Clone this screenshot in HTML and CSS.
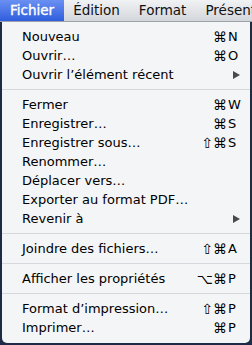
FILE: index.html
```html
<!DOCTYPE html>
<html lang="fr">
<head>
<meta charset="utf-8">
<link rel="stylesheet" href="styles.css">
</head>
<body>
<div class="screen">
  <div class="menubar">
    <span class="title active">Fichier</span>
    <span class="title">Édition</span>
    <span class="title">Format</span>
    <span class="title">Présentation</span>
  </div>
  <div class="menu">
    <div class="item"><span class="label">Nouveau</span><span class="mods">⌘</span><span class="key">N</span></div>
    <div class="item"><span class="label">Ouvrir…</span><span class="mods">⌘</span><span class="key">O</span></div>
    <div class="item"><span class="label">Ouvrir l’élément récent</span><span class="arrow"></span></div>
    <div class="sep"></div>
    <div class="item"><span class="label">Fermer</span><span class="mods">⌘</span><span class="key">W</span></div>
    <div class="item"><span class="label">Enregistrer…</span><span class="mods">⌘</span><span class="key">S</span></div>
    <div class="item"><span class="label">Enregistrer sous…</span><span class="mods">⇧⌘</span><span class="key">S</span></div>
    <div class="item"><span class="label">Renommer…</span></div>
    <div class="item"><span class="label">Déplacer vers…</span></div>
    <div class="item"><span class="label">Exporter au format PDF…</span></div>
    <div class="item"><span class="label">Revenir à</span><span class="arrow"></span></div>
    <div class="sep"></div>
    <div class="item"><span class="label">Joindre des fichiers…</span><span class="mods">⇧⌘</span><span class="key">A</span></div>
    <div class="sep"></div>
    <div class="item"><span class="label">Afficher les propriétés</span><span class="mods">⌥⌘</span><span class="key">P</span></div>
    <div class="sep"></div>
    <div class="item"><span class="label">Format d’impression…</span><span class="mods">⇧⌘</span><span class="key">P</span></div>
    <div class="item"><span class="label">Imprimer…</span><span class="mods">⌘</span><span class="key">P</span></div>
  </div>
</div>
</body>
</html>
```

FILE: styles.css
```css
html, body {
  margin: 0;
  padding: 0;
}
body {
  background: #1e2b45;
  width: 252px;
  height: 345px;
  overflow: hidden;
  font-family: "DejaVu Sans", "Liberation Sans", sans-serif;
  color: #000;
}
.screen {
  width: 252px;
  height: 345px;
}
.menubar {
  height: 21px;
  display: flex;
  background: linear-gradient(#f1f2f4, #d3d6db);
  border-bottom: 1px solid #9da2aa;
  white-space: nowrap;
  overflow: hidden;
}
.title {
  font-size: 13.5px;
  line-height: 21px;
  padding: 0 9.5px;
  color: #111;
}
.title.active {
  padding-left: 10px;
  color: #fff;
  background: linear-gradient(#6a90f2, #2f5ddd);
  -webkit-text-stroke: 0.35px #fff;
}
.menu {
  margin-left: 2px;
  width: 248px;
  background: #f4f5f7;
  border-radius: 0 0 5px 5px;
  padding: 5px 0 6px;
  box-sizing: border-box;
  height: 321px;
}
.item {
  display: grid;
  grid-template-columns: 1fr auto 12px;
  align-items: center;
  height: 19px;
  padding: 0 10px 0 20px;
  font-size: 13px;
  white-space: nowrap;
}
.label {
  grid-column: 1;
}
.mods {
  grid-column: 2;
  text-align: right;
  font-size: 14px;
  padding-right: 1px;
}
.key {
  grid-column: 3;
}
.arrow {
  grid-column: 2 / 4;
  justify-self: end;
  width: 0;
  height: 0;
  border-top: 4.5px solid transparent;
  border-bottom: 4.5px solid transparent;
  border-left: 7px solid #4a4a4a;
}
.sep {
  height: 1px;
  padding: 5px 0;
  background: #d5d8dc;
  background-clip: content-box;
}
```
